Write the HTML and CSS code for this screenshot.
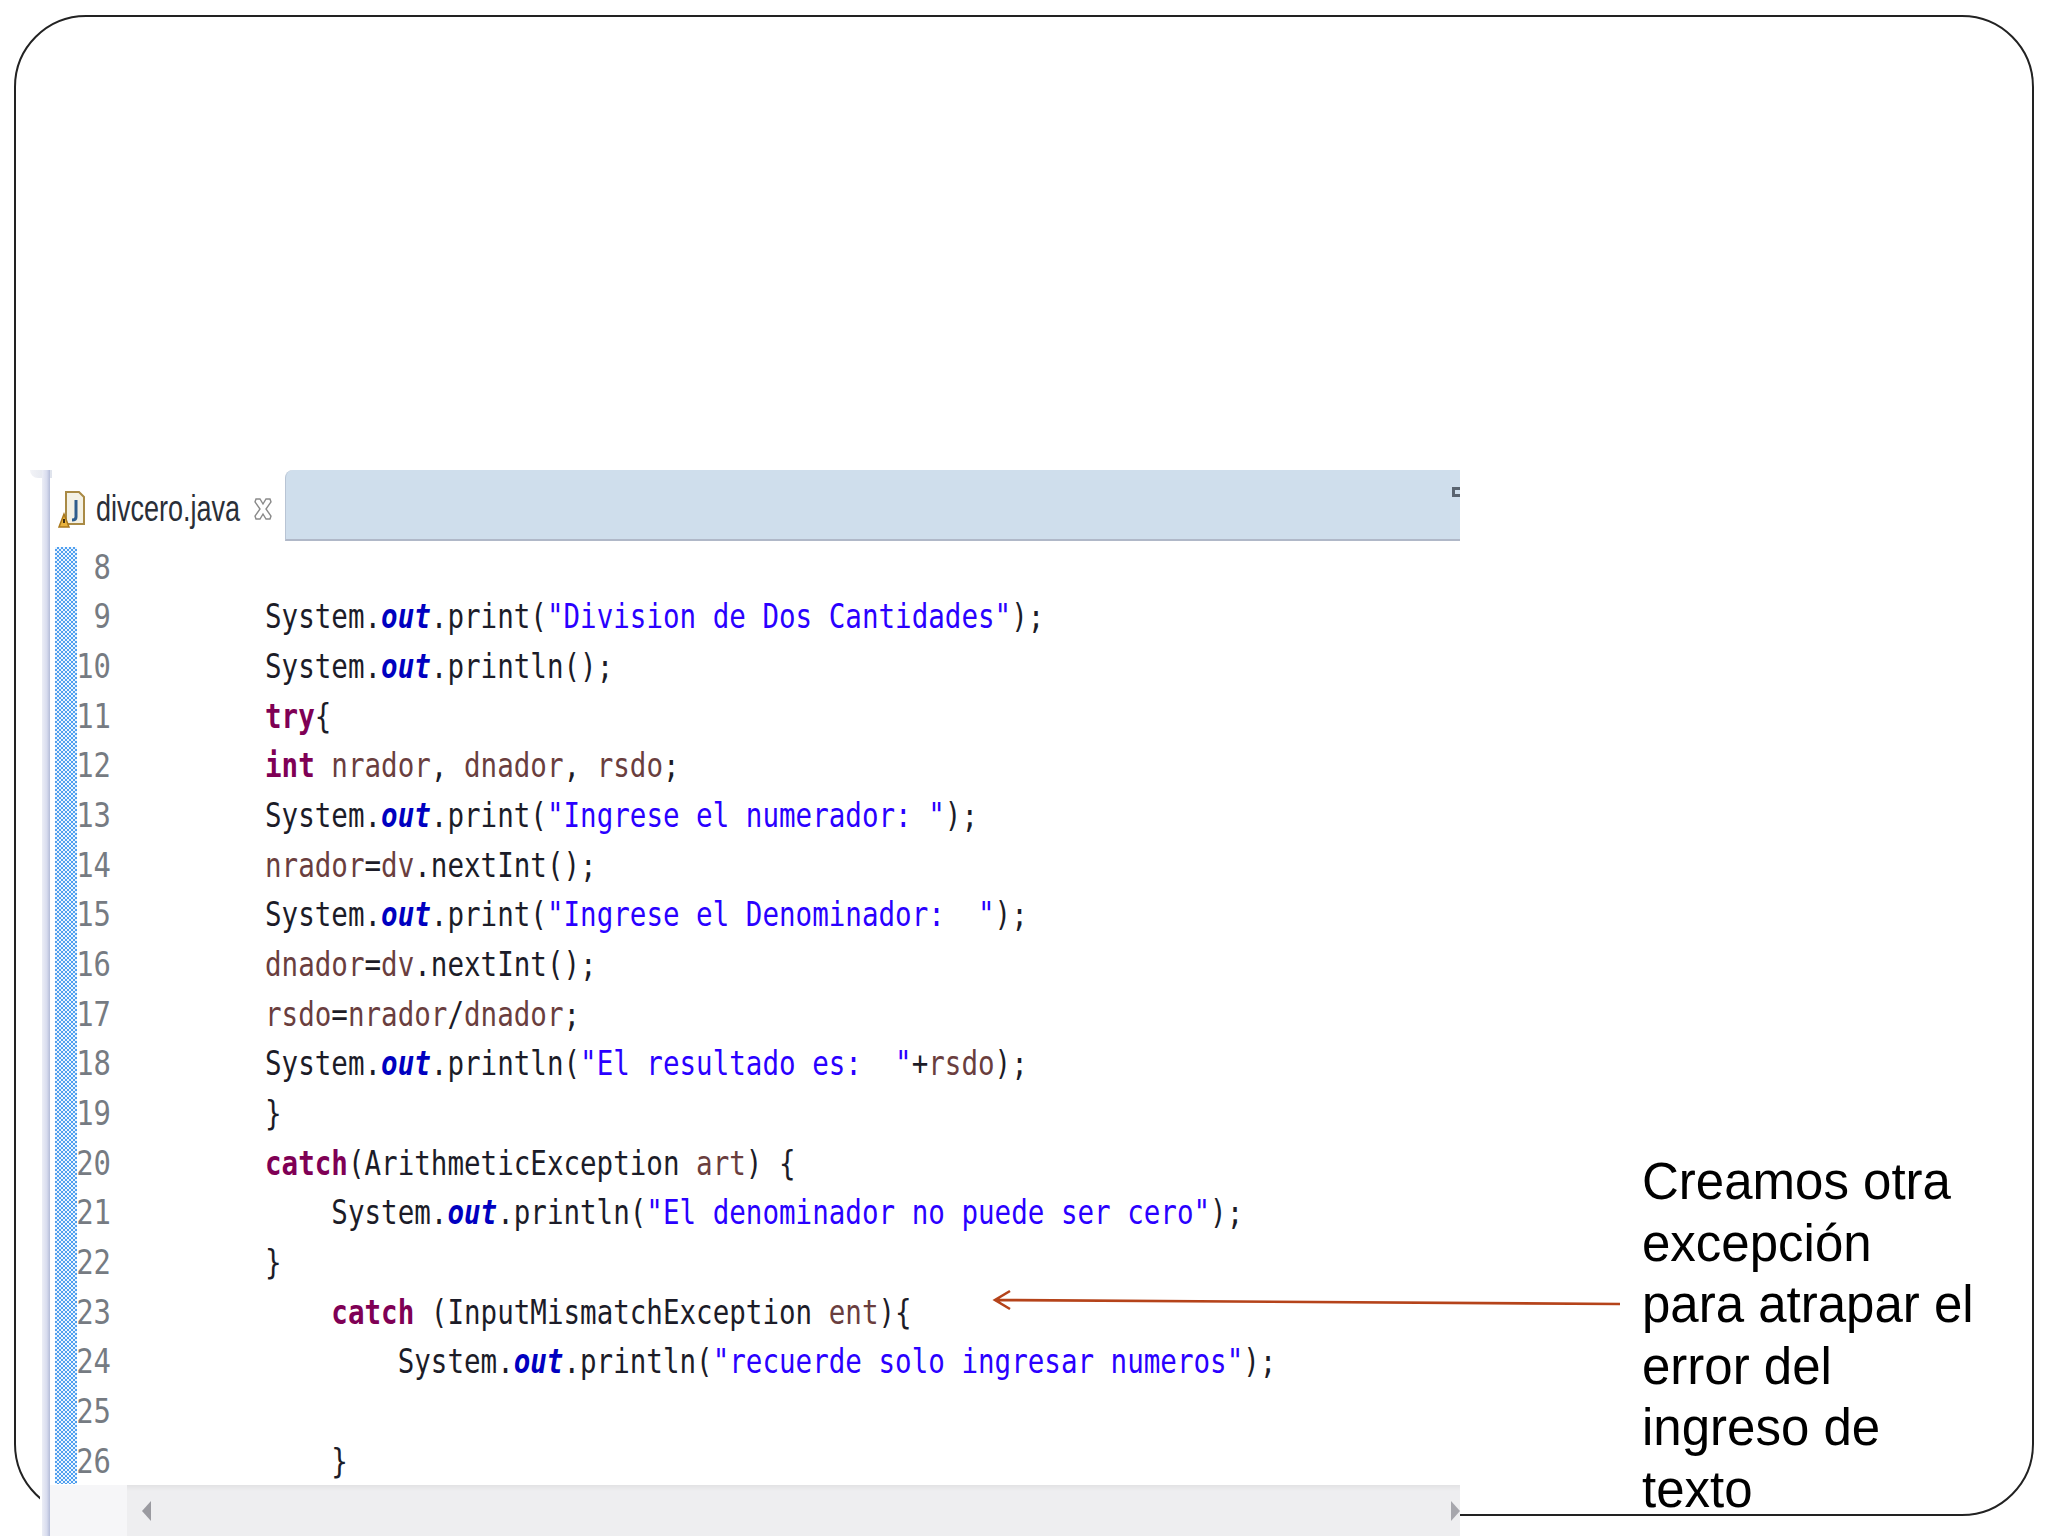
FILE: index.html
```html
<!DOCTYPE html>
<html lang="es">
<head>
<meta charset="utf-8">
<title>divcero.java</title>
<link rel="stylesheet" href="styles.css">
</head>
<body>
<main class="slide">
  <div class="frame"></div>
  <section class="editor">
    <header class="tabbar">
      <div class="tab">
        <svg class="file-icon" viewBox="0 0 28 38" width="28" height="38">
          <path d="M8 2H21L26 7V34H8Z" fill="#f4f1e4" stroke="#a98a45" stroke-width="2"/>
          <path d="M18 10V27Q18 30 14 30" fill="none" stroke="#2f5d8c" stroke-width="3"/>
          <path d="M1 37L6 24L11 37Z" fill="#e8b23c" stroke="#a9781c" stroke-width="1.5"/>
          <rect x="5" y="29" width="2" height="4" fill="#3a2a10"/>
        </svg>
        <span class="tab-name">divcero.java</span>
        <svg class="close-icon" viewBox="0 0 20 24" width="20" height="24">
          <path d="M3 2L7 2L10 7L13 2L17 2L18 5L13 12L18 19L17 22L13 22L10 17L7 22L3 22L2 19L7 12L2 5Z" fill="#fff" stroke="#8a8a8a" stroke-width="1.4"/>
        </svg>
      </div>
      <div class="tab-fill"><span class="max-icon"></span></div>
    </header>
    <div class="body">
      <div class="ruler"></div>
      <div class="rows">
        <div class="row"><span class="num">8</span><span class="code"> </span></div>
        <div class="row"><span class="num">9</span><span class="code">System.<b class="fld">out</b>.print(<span class="str">"Division de Dos Cantidades"</span>);</span></div>
        <div class="row"><span class="num">10</span><span class="code">System.<b class="fld">out</b>.println();</span></div>
        <div class="row"><span class="num">11</span><span class="code"><b class="kw">try</b>{</span></div>
        <div class="row"><span class="num">12</span><span class="code"><b class="kw">int</b> <span class="var">nrador</span>, <span class="var">dnador</span>, <span class="var">rsdo</span>;</span></div>
        <div class="row"><span class="num">13</span><span class="code">System.<b class="fld">out</b>.print(<span class="str">"Ingrese el numerador: "</span>);</span></div>
        <div class="row"><span class="num">14</span><span class="code"><span class="var">nrador</span>=<span class="var">dv</span>.nextInt();</span></div>
        <div class="row"><span class="num">15</span><span class="code">System.<b class="fld">out</b>.print(<span class="str">"Ingrese el Denominador:  "</span>);</span></div>
        <div class="row"><span class="num">16</span><span class="code"><span class="var">dnador</span>=<span class="var">dv</span>.nextInt();</span></div>
        <div class="row"><span class="num">17</span><span class="code"><span class="var">rsdo</span>=<span class="var">nrador</span>/<span class="var">dnador</span>;</span></div>
        <div class="row"><span class="num">18</span><span class="code">System.<b class="fld">out</b>.println(<span class="str">"El resultado es:  "</span>+<span class="var">rsdo</span>);</span></div>
        <div class="row"><span class="num">19</span><span class="code">}</span></div>
        <div class="row"><span class="num">20</span><span class="code"><b class="kw">catch</b>(ArithmeticException <span class="var">art</span>) {</span></div>
        <div class="row"><span class="num">21</span><span class="code">    System.<b class="fld">out</b>.println(<span class="str">"El denominador no puede ser cero"</span>);</span></div>
        <div class="row"><span class="num">22</span><span class="code">}</span></div>
        <div class="row"><span class="num">23</span><span class="code">    <b class="kw">catch</b> (InputMismatchException <span class="var">ent</span>){</span></div>
        <div class="row"><span class="num">24</span><span class="code">        System.<b class="fld">out</b>.println(<span class="str">"recuerde solo ingresar numeros"</span>);</span></div>
        <div class="row"><span class="num">25</span><span class="code"> </span></div>
        <div class="row"><span class="num">26</span><span class="code">    }</span></div>
      </div>
    </div>
    <footer class="scrollbar">
      <div class="scroll-corner"></div>
      <div class="scroll-track">
        <svg viewBox="0 0 9 20" width="9" height="20"><path d="M9 0V20L0 10Z" fill="#9a9aa0"/></svg>
        <svg viewBox="0 0 9 20" width="9" height="20"><path d="M0 0V20L9 10Z" fill="#a6a6ac"/></svg>
      </div>
    </footer>
  </section>
  <svg class="arrow" viewBox="0 0 640 30" width="640" height="30">
    <path d="M628 16L3 12M18 3L3 12L18 21" fill="none" stroke="#b5431a" stroke-width="2.6"/>
  </svg>
  <p class="note">Creamos otra excepción para atrapar el error del ingreso de texto</p>
</main>
</body>
</html>
```

FILE: styles.css
```css
* { box-sizing: border-box; }
html, body { margin: 0; padding: 0; background: #fff; }
.slide { position: relative; width: 2048px; height: 1536px; overflow: hidden; background: #fff; }
.frame { position: absolute; left: 14px; top: 15px; width: 2020px; height: 1501px; border: 2px solid #222; border-radius: 72px; }

.editor { position: absolute; left: 40px; top: 470px; width: 1420px; height: 1066px; background: #fff; display: flex; flex-direction: column; border-left: 2px solid #fff; }
.editor::before { content: ""; position: absolute; left: -12px; top: 0; width: 22px; height: 8px; background: linear-gradient(90deg, #f2f3f7, #dfe3ec); border-radius: 0 0 0 8px; }
.editor::after { content: ""; position: absolute; left: 0; top: 0; bottom: 0; width: 8px; background: linear-gradient(90deg, #eceef6, #d8dcee 60%, #b4bcd8); }

.tabbar { height: 71px; display: flex; flex: none; }
.tab { width: 243px; display: flex; align-items: center; gap: 10px; padding: 6px 0 0 16px; background: #fff; flex: none; }
.file-icon { flex: none; }
.tab-name { width: 144px; font: 36px/44px "Liberation Sans", sans-serif; color: #2a2f38; transform: scaleX(.75); transform-origin: left center; white-space: nowrap; }
.close-icon { margin-left: 3px; flex: none; }
.tab-fill { flex: 1; background: #cfdeec; border-bottom: 2px solid #b0b8c8; position: relative; border-left: 1px solid #b8c4d4; border-top-left-radius: 8px; }
.max-icon { position: absolute; right: 0; top: 17px; width: 8px; height: 10px; border: 3px solid #5a6470; border-right: 0; }

.body { display: flex; height: 944px; flex: none; padding-left: 13px; }
.ruler { width: 22px; height: 937px; margin-top: 6px; flex: none; background: repeating-conic-gradient(#4f9fee 0 25%, #eaf4ff 0 50%) 0 0 / 4px 4px; }
.rows { flex: 1; }
.row { height: 49.66px; display: flex; align-items: center; padding-top: 2px; }
.num { width: 44px; margin-left: -10px; flex: none; text-align: right; font: 34px/48px "DejaVu Sans Mono", monospace; color: #767b82; transform: scaleX(.85); transform-origin: right center; white-space: pre; }
.code { margin-left: 154px; font: 34px/48px "DejaVu Sans Mono", monospace; color: #1c1c28; white-space: pre; transform: scaleX(.81); transform-origin: left center; }
.fld { color: #0000c0; font-style: italic; font-weight: 700; }
.kw { color: #7f0055; font-weight: 700; }
.str { color: #2a00ff; }
.var { color: #6a3e3e; }

.scrollbar { flex: 1; display: flex; padding-left: 8px; }
.scroll-corner { width: 77px; flex: none; background: #f6f6f8; }
.scroll-track { flex: 1; display: flex; justify-content: space-between; align-items: center; padding: 0 0 0 15px; background: linear-gradient(#e2e2e4, #eeeef0 6px); }

.arrow { position: absolute; left: 992px; top: 1288px; }
.note { position: absolute; left: 1642px; top: 1151px; width: 336px; margin: 0; font: 51px/61.5px "Liberation Sans", Arial, sans-serif; color: #000; }
```
